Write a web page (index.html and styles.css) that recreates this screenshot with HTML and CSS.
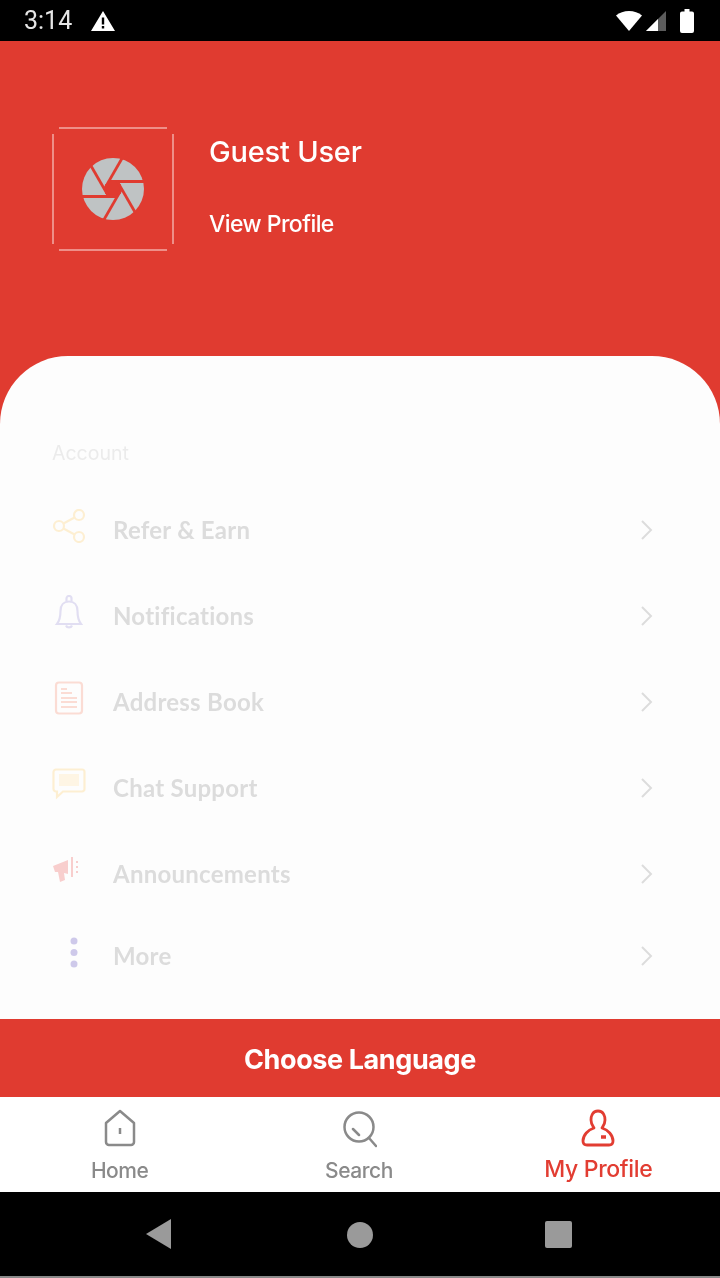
FILE: index.html
```
<!DOCTYPE html>
<html lang="en">
<head>
<meta charset="utf-8">
<title>My Profile</title>
<link rel="stylesheet" href="styles.css">
</head>
<body>
<div class="screen">
  <header class="status">
    <div class="status-left">
      <span class="time">3:14</span>
      <svg class="warn" viewBox="0 0 24 20"><path fill="#fff" fill-rule="evenodd" d="M12 0 24 20H0ZM10.800 6.500v7h2.400v-7ZM10.800 15v2.400h2.400V15Z"/></svg>
    </div>
    <div class="status-right">
      <svg class="wifi" viewBox="0 0 26 20"><path fill="#fff" d="M0 4.500C3.500 1.500 8 0 13 0s9.500 1.500 13 4.500L13 20Z"/></svg>
      <svg class="signal" viewBox="0 0 20 20"><path fill="#5c5c5c" d="M20 0V20H0Z"/><path fill="#fff" d="M12 8V20H0Z"/></svg>
      <svg class="battery" viewBox="0 0 14 24"><path fill="#fff" d="M4.500 0h5v2.500H12a2 2 0 0 1 2 2V22a2 2 0 0 1-2 2H2a2 2 0 0 1-2-2V4.500a2 2 0 0 1 2-2h2.500Z"/></svg>
    </div>
  </header>

  <main class="content">
    <section class="hero">
      <div class="avatar">
        <svg class="shutter" viewBox="0 0 62 62">
          <circle cx="31" cy="31" r="31" fill="#bfc3c4"/>
          <polygon fill="#e03b30" points="31,22 39,26.500 39,35.500 31,40 23,35.500 23,26.500"/>
          <g stroke="#e03b30" stroke-width="2.800">
            <path d="M26 23.500H63"/>
            <path d="M26 23.500H63" transform="rotate(60 31 31)"/>
            <path d="M26 23.500H63" transform="rotate(120 31 31)"/>
            <path d="M26 23.500H63" transform="rotate(180 31 31)"/>
            <path d="M26 23.500H63" transform="rotate(240 31 31)"/>
            <path d="M26 23.500H63" transform="rotate(300 31 31)"/>
          </g>
        </svg>
      </div>
      <div class="identity">
        <div class="name">Guest User</div>
        <div class="view">View Profile</div>
      </div>
    </section>

    <section class="sheet">
      <div class="section-title">Account</div>
      <ul class="menu">
        <li class="row">
          <svg class="icon" viewBox="0 0 34 34" fill="none" stroke="#ffd27a" stroke-width="2.200"><circle cx="7" cy="17" r="5"/><circle cx="27" cy="6" r="5"/><circle cx="27" cy="28" r="5"/><path d="M11.500 14.500 22.500 8.500M11.500 19.500 22.500 25.500"/></svg>
          <span class="label">Refer &amp; Earn</span>
          <svg class="chev" viewBox="0 0 14 22" fill="none" stroke="#bdbdbd" stroke-width="2"><path d="M2 2 11 11 2 20"/></svg>
        </li>
        <li class="row">
          <svg class="icon" viewBox="0 0 34 34" fill="none" stroke="#a9a0dc" stroke-width="2.200"><path d="M5 29C8 25 8.500 22 8.500 16 8.500 10 12 6.500 17 6.500S25.500 10 25.500 16C25.500 22 26 25 29 29Z"/><path d="M14.500 6V3.500A2.500 2.500 0 0 1 19.500 3.500V6"/><path d="M14 30.500C15 33 19 33 20 30.500"/></svg>
          <span class="label">Notifications</span>
          <svg class="chev" viewBox="0 0 14 22" fill="none" stroke="#bdbdbd" stroke-width="2"><path d="M2 2 11 11 2 20"/></svg>
        </li>
        <li class="row">
          <svg class="icon" viewBox="0 0 34 34" fill="none" stroke="#f79a80" stroke-width="2.200"><rect x="4" y="1.500" width="26" height="31" rx="3"/><path d="M9 8H15M9 12H20M9 17H25M9 21H25M9 26H25"/></svg>
          <span class="label">Address Book</span>
          <svg class="chev" viewBox="0 0 14 22" fill="none" stroke="#bdbdbd" stroke-width="2"><path d="M2 2 11 11 2 20"/></svg>
        </li>
        <li class="row">
          <svg class="icon icon-chat" viewBox="0 0 34 34" fill="none" stroke="#ffd27a" stroke-width="2.200"><path d="M4 1.500H30A2.500 2.500 0 0 1 32.500 4V21A2.500 2.500 0 0 1 30 23.500H11L5 29V23.500H4A2.500 2.500 0 0 1 1.500 21V4A2.500 2.500 0 0 1 4 1.500Z"/><rect x="7" y="6" width="20" height="12" fill="#ffd27a" fill-opacity=".6" stroke="none"/></svg>
          <span class="label">Chat Support</span>
          <svg class="chev" viewBox="0 0 14 22" fill="none" stroke="#bdbdbd" stroke-width="2"><path d="M2 2 11 11 2 20"/></svg>
        </li>
        <li class="row">
          <svg class="icon" viewBox="0 0 34 34"><path fill="#ee6f6a" d="M1 13 16 7V21L12 20 13 27 8 29 6 19 3 19Z"/><path fill="#ee6f6a" d="M19 4 21 4V24L19 24Z"/><path fill="none" stroke="#ee6f6a" stroke-width="2" stroke-dasharray="2 3" d="M25 8V22"/></svg>
          <span class="label">Announcements</span>
          <svg class="chev" viewBox="0 0 14 22" fill="none" stroke="#bdbdbd" stroke-width="2"><path d="M2 2 11 11 2 20"/></svg>
        </li>
        <li class="row row-last">
          <svg class="icon icon-more" viewBox="0 0 34 34" fill="#a9a0dc"><circle cx="22" cy="5" r="3.500"/><circle cx="22" cy="16.500" r="3.500"/><circle cx="22" cy="28" r="3.500"/></svg>
          <span class="label">More</span>
          <svg class="chev" viewBox="0 0 14 22" fill="none" stroke="#bdbdbd" stroke-width="2"><path d="M2 2 11 11 2 20"/></svg>
        </li>
      </ul>
    </section>

    <button class="language">Choose Language</button>
  </main>

  <nav class="tabs">
    <div class="tab">
      <svg class="tab-icon" viewBox="0 0 36 40" fill="none" stroke="#8a8a8a" stroke-width="2.500"><path d="M18 2 32 14V33A3 3 0 0 1 29 36H7A3 3 0 0 1 4 33V14Z" stroke-linejoin="round"/><path d="M18 19V25"/></svg>
      <span>Home</span>
    </div>
    <div class="tab">
      <svg class="tab-icon" viewBox="0 0 36 40" fill="none" stroke="#8a8a8a" stroke-width="2.500"><circle cx="18" cy="18" r="14.500"/><path d="M28 29 35 37M12 20 18 26" stroke-linecap="round"/></svg>
      <span>Search</span>
    </div>
    <div class="tab tab-active">
      <svg class="tab-icon" viewBox="0 0 36 40" fill="none" stroke="#e23d32" stroke-width="2.800"><path d="M18 2C12 2 11 8 11 11 11 15 13 17 14 19 8 21 3 26 3 32 3 35 5 36 7 36H29C31 36 33 35 33 32 33 26 28 21 22 19 23 17 25 15 25 11 25 8 24 2 18 2Z" stroke-linejoin="round"/><path d="M21 28H26" stroke-width="3.500"/></svg>
      <span>My Profile</span>
    </div>
  </nav>

  <footer class="system">
    <svg class="sys-back" viewBox="0 0 25 30"><path fill="#9a9a9a" d="M25 0V30L0 15Z"/></svg>
    <span class="sys-home"></span>
    <span class="sys-recent"></span>
  </footer>
</div>
</body>
</html>
```

FILE: styles.css
```
* { box-sizing: border-box; }
html, body { margin: 0; padding: 0; }
body { width: 720px; height: 1278px; overflow: hidden; background: #8a8a8a; font-family: Inter, "Liberation Sans", sans-serif; }
.screen { width: 720px; height: 1278px; display: flex; flex-direction: column; filter: blur(.6px); }

.status { height: 41px; background: #000; display: flex; justify-content: space-between; align-items: center; padding: 0 26px 0 24px; color: #e6e6e6; }
.status-left { display: flex; align-items: center; gap: 19px; }
.time { font-family: Roboto, sans-serif; font-size: 25px; line-height: 41px; }
.warn { width: 24px; height: 20px; }
.status-right { display: flex; align-items: center; }
.wifi { width: 26px; height: 20px; margin-right: 4px; }
.signal { width: 20px; height: 20px; margin-right: 14px; }
.battery { width: 14px; height: 24px; }

.content { height: 1056px; background: #e03b30; display: flex; flex-direction: column; }
.hero { height: 315px; padding: 86px 0 0 52px; display: flex; align-items: flex-start; gap: 35px; }
.avatar { position: relative; width: 122px; height: 124px; display: flex; align-items: center; justify-content: center; }
.avatar::before { content: ""; position: absolute; inset: 0 7px; border-top: 2px solid #ee8f88; border-bottom: 2px solid #ee8f88; }
.avatar::after { content: ""; position: absolute; inset: 7px 0; border-left: 2px solid #ee8f88; border-right: 2px solid #ee8f88; }
.shutter { width: 62px; height: 62px; }
.identity { color: #fff; padding-top: 7px; }
.name { font-size: 29px; font-weight: 500; line-height: 36px; letter-spacing: -.2px; }
.view { margin-top: 39px; font-size: 23px; font-weight: 500; line-height: 30px; letter-spacing: -.55px; }

.sheet { flex: 1; background: #fdfdfd; border-radius: 68px 68px 0 0; padding: 84px 66px 0 52px; }
.section-title { font-size: 19.500px; line-height: 26px; color: #ebebeb; }
.menu { list-style: none; margin: 20px 0 0; padding: 0; }
.row { height: 86px; display: flex; align-items: center; }
.row-last { height: 78px; }
.icon { width: 34px; height: 34px; opacity: .32; flex: none; margin-top: -7px; }
.icon-chat { margin-top: -4px; }
.icon-more { opacity: .55; margin-top: -4px; }
.label { flex: 1; margin-left: 27px; font-family: Lato, sans-serif; font-size: 24px; font-weight: 700; letter-spacing: .25px; color: #dcdcdc; }
.chev { width: 14px; height: 22px; opacity: .5; flex: none; margin-top: 1px; }

.language { height: 78px; border: 0; padding: 3px 0 0; background: #e03b30; color: #fff; font-family: Inter, sans-serif; font-size: 27px; font-weight: 700; letter-spacing: -.4px; flex: none; }

.tabs { height: 95px; background: #fff; display: flex; padding: 0 2px 0 0; }
.tab { flex: 1; display: flex; flex-direction: column; align-items: center; padding-top: 12px; color: #8a8a8a; font-size: 21px; font-weight: 500; letter-spacing: -.45px; }
.tab span { margin-top: 8px; line-height: 28px; }
.tab-icon { width: 36px; height: 40px; }
.tab-active { color: #e23d32; font-size: 23px; letter-spacing: -.35px; }
.tab-active span { margin-top: 6px; }

.system { height: 84px; margin-bottom: 2px; background: #000; display: flex; align-items: center; padding-left: 146px; flex: none; }
.sys-back { width: 25px; height: 30px; margin-right: 176px; }
.sys-home { width: 26px; height: 26px; border-radius: 50%; background: #9a9a9a; margin-right: 172px; margin-top: 2px; }
.sys-recent { width: 27px; height: 27px; border-radius: 2px; background: #9a9a9a; }
```
